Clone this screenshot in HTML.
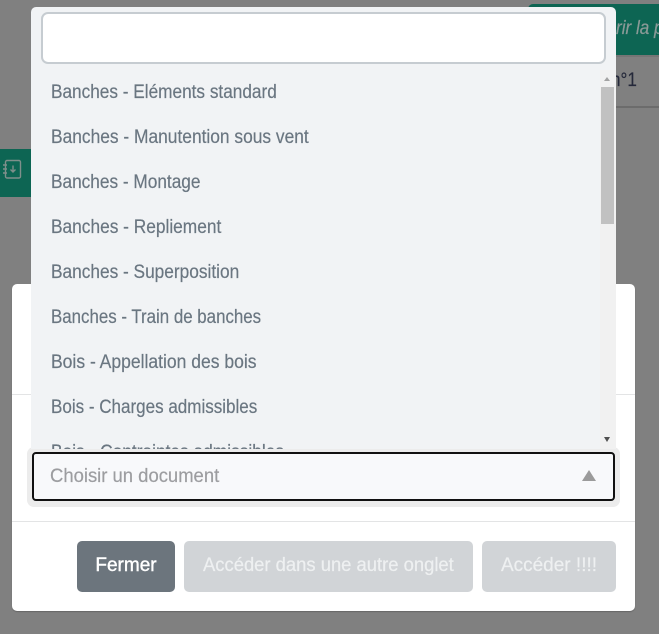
<!DOCTYPE html>
<html><head><meta charset="utf-8">
<style>
html,body{margin:0;padding:0}
body{width:659px;height:634px;position:relative;overflow:hidden;background:#808080;font-family:"Liberation Sans",sans-serif}
div,span,svg{position:absolute;box-sizing:border-box}
.t{white-space:nowrap;font-size:19px;line-height:24px;color:#6a7681;left:51px;transform-origin:0 50%;-webkit-text-stroke:.2px currentColor}
.btn{top:541px;height:51px;border-radius:5px;background:#d1d4d7;color:#eef0f1;font-size:19px;line-height:50px;text-align:center;white-space:nowrap;-webkit-text-stroke:.2px currentColor}
.btn span{position:static;display:inline-block}
</style></head>
<body>
<!-- background -->
<div style="left:528px;top:4px;width:131px;height:51px;background:#0d6553;border-radius:5px 0 0 0"></div>
<div class="t" style="left:616px;top:17px;font-style:italic;color:#8a9a97;transform:scaleX(.9)">rir la p</div>
<div style="left:528px;top:55px;width:131px;height:2px;background:#757575"></div>
<div class="t" style="left:611px;top:69px;color:#25293a;transform:scaleX(.9)">n°1</div>
<div style="left:528px;top:106px;width:131px;height:2px;background:#6c6c6c"></div>
<div style="left:0;top:149px;width:31px;height:48px;background:#0d6553"></div>
<svg style="left:2px;top:158px" width="20" height="23" viewBox="0 0 20 23" fill="none" stroke="#7f8f8b" stroke-width="1.4">
<rect x="3.500" y="2.500" width="15" height="17.500" rx="1.500"/>
<path d="M1 7h4M1 11h4M1 15h4M11 7.500v6.500M8.500 11.500l2.500 2.500 2.500-2.500"/>
</svg>

<!-- modal -->
<div style="left:12px;top:284px;width:623px;height:327px;background:#fff;border-radius:5px;box-shadow:0 1px 1px #666"></div>
<div style="left:12px;top:394px;width:623px;height:1px;background:#e3e4e5"></div>
<div style="left:12px;top:521px;width:623px;height:1px;background:#e3e4e5"></div>

<!-- select -->
<div style="left:27px;top:447px;width:593px;height:60px;background:#ececec;border-radius:7px"></div>
<div style="left:32px;top:452px;width:583px;height:49px;background:#f8f9fb;border:2px solid #111;border-radius:4px"></div>
<div class="t" style="left:50px;top:465px;color:#9c9da0;transform:scaleX(.971)">Choisir un document</div>
<div style="left:582px;top:470px;width:0;height:0;border-left:7.500px solid transparent;border-right:7.500px solid transparent;border-bottom:11px solid #9b9b9b"></div>

<!-- buttons -->
<div class="btn" style="left:77px;width:98px;background:#6c757d;color:#fff;-webkit-text-stroke:.4px #fff">Fermer</div>
<div class="btn" style="left:184px;width:289px"><span style="transform:scaleX(.969)">Accéder dans une autre onglet</span></div>
<div class="btn" style="left:482px;width:134px">Accéder !!!!</div>

<!-- dropdown -->
<div style="left:31px;top:7px;width:585px;height:442px;background:#f1f3f5;border-radius:5px 5px 0 0;overflow:hidden">
  <div class="t" style="left:20px;top:74px;transform:scaleX(.906)">Banches - Eléments standard</div>
  <div class="t" style="left:20px;top:119px;transform:scaleX(.914)">Banches - Manutention sous vent</div>
  <div class="t" style="left:20px;top:164px;transform:scaleX(.907)">Banches - Montage</div>
  <div class="t" style="left:20px;top:209px;transform:scaleX(.911)">Banches - Repliement</div>
  <div class="t" style="left:20px;top:254px;transform:scaleX(.909)">Banches - Superposition</div>
  <div class="t" style="left:20px;top:299px;transform:scaleX(.888)">Banches - Train de banches</div>
  <div class="t" style="left:20px;top:344px;transform:scaleX(.922)">Bois - Appellation des bois</div>
  <div class="t" style="left:20px;top:389px;transform:scaleX(.896)">Bois - Charges admissibles</div>
  <div class="t" style="left:20px;top:434px;transform:scaleX(.912)">Bois - Contraintes admissibles</div>
  <div style="left:569px;top:63px;width:16px;height:379px;background:#f1f1f1"></div>
  <div style="left:570px;top:80px;width:13px;height:137px;background:#c1c1c1"></div>
  <div style="left:573px;top:70px;width:0;height:0;border-left:3.500px solid transparent;border-right:3.500px solid transparent;border-bottom:4px solid #a3a3a3"></div>
  <div style="left:573px;top:430px;width:0;height:0;border-left:3.500px solid transparent;border-right:3.500px solid transparent;border-top:5px solid #505050"></div>
</div>
<div style="left:41px;top:12px;width:565px;height:52px;background:#fff;border:2px solid #c6ccd1;border-radius:7px"></div>
</body></html>
